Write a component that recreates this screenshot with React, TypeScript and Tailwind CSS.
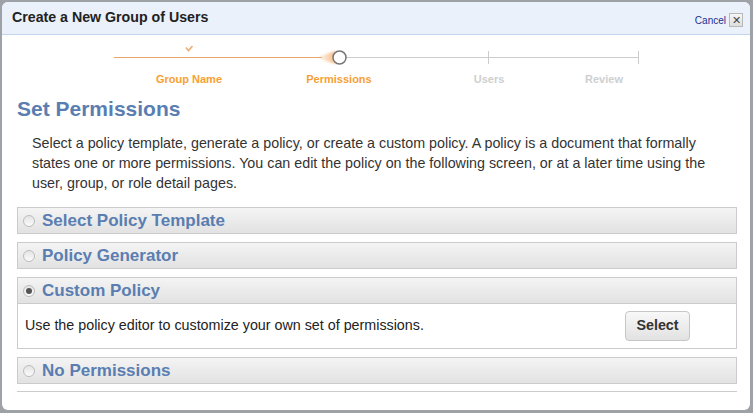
import React from 'react'

type Panel = { title: string; checked?: boolean; body?: string }

const panels: Panel[] = [
    { title: 'Select Policy Template' },
    { title: 'Policy Generator' },
    { title: 'Custom Policy', checked: true, body: 'Use the policy editor to customize your own set of permissions.' },
    { title: 'No Permissions' },
]

function Radio({ checked }: { checked?: boolean }) {
    return (
        <span className="flex items-center justify-center w-[12px] h-[12px] rounded-full border border-[#bcbcbc] bg-gradient-to-b from-[#e4e4e4] to-[#fbfbfb] mr-[7px] shrink-0">
            {checked && <span className="w-[6px] h-[6px] rounded-full bg-[#555]" />}
        </span>
    )
}

function Stepper() {
    return (
        <div className="relative h-[62px]">
            <svg width="753" height="34" className="absolute left-[-2px] top-0">
                <defs>
                    <linearGradient id="glow" x1="0" x2="1" y1="0" y2="0">
                        <stop offset="0" stopColor="#f6a35a" stopOpacity="0" />
                        <stop offset="1" stopColor="#f6a35a" stopOpacity="0.7" />
                    </linearGradient>
                    <filter id="soft" x="-50%" y="-50%" width="200%" height="200%">
                        <feGaussianBlur stdDeviation="1.2" />
                    </filter>
                </defs>
                {/* done part */}
                <line x1="114" y1="22.5" x2="322" y2="22.5" stroke="#e9a66a" strokeWidth="1" />
                <path d="M316 22.5 L335 16 L335 29 Z" fill="url(#glow)" filter="url(#soft)" />
                {/* remaining part */}
                <line x1="346" y1="22.5" x2="638" y2="22.5" stroke="#cccccc" strokeWidth="1" />
                <line x1="488.5" y1="16" x2="488.5" y2="29" stroke="#cccccc" strokeWidth="1" />
                <line x1="638.5" y1="16" x2="638.5" y2="29" stroke="#cccccc" strokeWidth="1" />
                <circle cx="339.5" cy="22.5" r="6.5" fill="#fff" stroke="#777" strokeWidth="1.5" />
                {/* check */}
                <path d="M186 12.5 L188.5 15.5 L192.5 11" fill="none" stroke="#efb27c" strokeWidth="1.8" />
            </svg>
            <div className="absolute left-0 top-[36px] flex text-[11px] font-bold">
                <span className="ml-[112px] w-[150px] text-center text-[#f7a032]">Group Name</span>
                <span className="w-[150px] text-center text-[#f7a032]">Permissions</span>
                <span className="w-[150px] text-center text-[#cfcfcf]">Users</span>
                <span className="ml-[2px] w-[76px] text-center text-[#cfcfcf]">Review</span>
            </div>
        </div>
    )
}

export default function App() {
    return (
        <div className="w-[753px] h-[413px] bg-[#9ea2a6] pl-[2px] pr-[3px] pt-[2px] pb-[3px] font-['Liberation_Sans',Arial,sans-serif]">
            <div className="h-full bg-white rounded-[6px] overflow-hidden">
                {/* header */}
                <div className="h-[33px] flex items-center justify-between bg-[#eaf1fb] border-b border-[#c3d6ee] pl-[10px] pr-[7px]">
                    <h1 className="text-[14.2px] font-bold text-[#222]">Create a New Group of Users</h1>
                    <div className="flex items-center gap-[3px] mt-[4px]">
                        <a className="text-[10px] text-[#1c2f8f]">Cancel</a>
                        <span className="flex items-center justify-center w-[14px] h-[14px] border border-[#b9b9b9] bg-gradient-to-b from-[#f6f6f6] to-[#dedede] text-[#444] text-[11px] leading-none">
                            ✕
                        </span>
                    </div>
                </div>

                <Stepper />

                <div className="pl-[15px] pr-[13px]">
                    <h2 className="text-[21px] font-bold text-[#5a7eb1] leading-[24px]">Set Permissions</h2>
                    <p className="mt-[12px] pl-[15px] w-[715px] text-[14.3px] leading-[20px] text-[#333]">
                        Select a policy template, generate a policy, or create a custom policy. A policy is a document that formally
                        states one or more permissions. You can edit the policy on the following screen, or at a later time using the
                        user, group, or role detail pages.
                    </p>

                    <div className="mt-[14px] flex flex-col gap-[8px]">
                        {panels.map((p) => (
                            <div key={p.title} className="border border-[#cbcbcb]">
                                <div className="h-[25px] flex items-center pl-[5px] bg-gradient-to-b from-[#f4f4f4] to-[#e2e2e2]">
                                    <Radio checked={p.checked} />
                                    <span className="text-[17px] font-bold text-[#5a7eb1]">{p.title}</span>
                                </div>
                                {p.body && (
                                    <div className="h-[45px] border-t border-[#cbcbcb] flex items-center justify-between pl-[7px] pr-[46px]">
                                        <span className="text-[14.3px] text-[#222]">{p.body}</span>
                                        <button className="w-[65px] h-[30px] rounded-[4px] border border-[#c6c6c6] bg-gradient-to-b from-[#f8f8f8] to-[#e2e2e2] text-[14.3px] font-bold text-[#333]">
                                            Select
                                        </button>
                                    </div>
                                )}
                            </div>
                        ))}
                    </div>
                    <div className="mt-[7px] border-t border-[#cbcbcb]" />
                </div>
            </div>
        </div>
    )
}
